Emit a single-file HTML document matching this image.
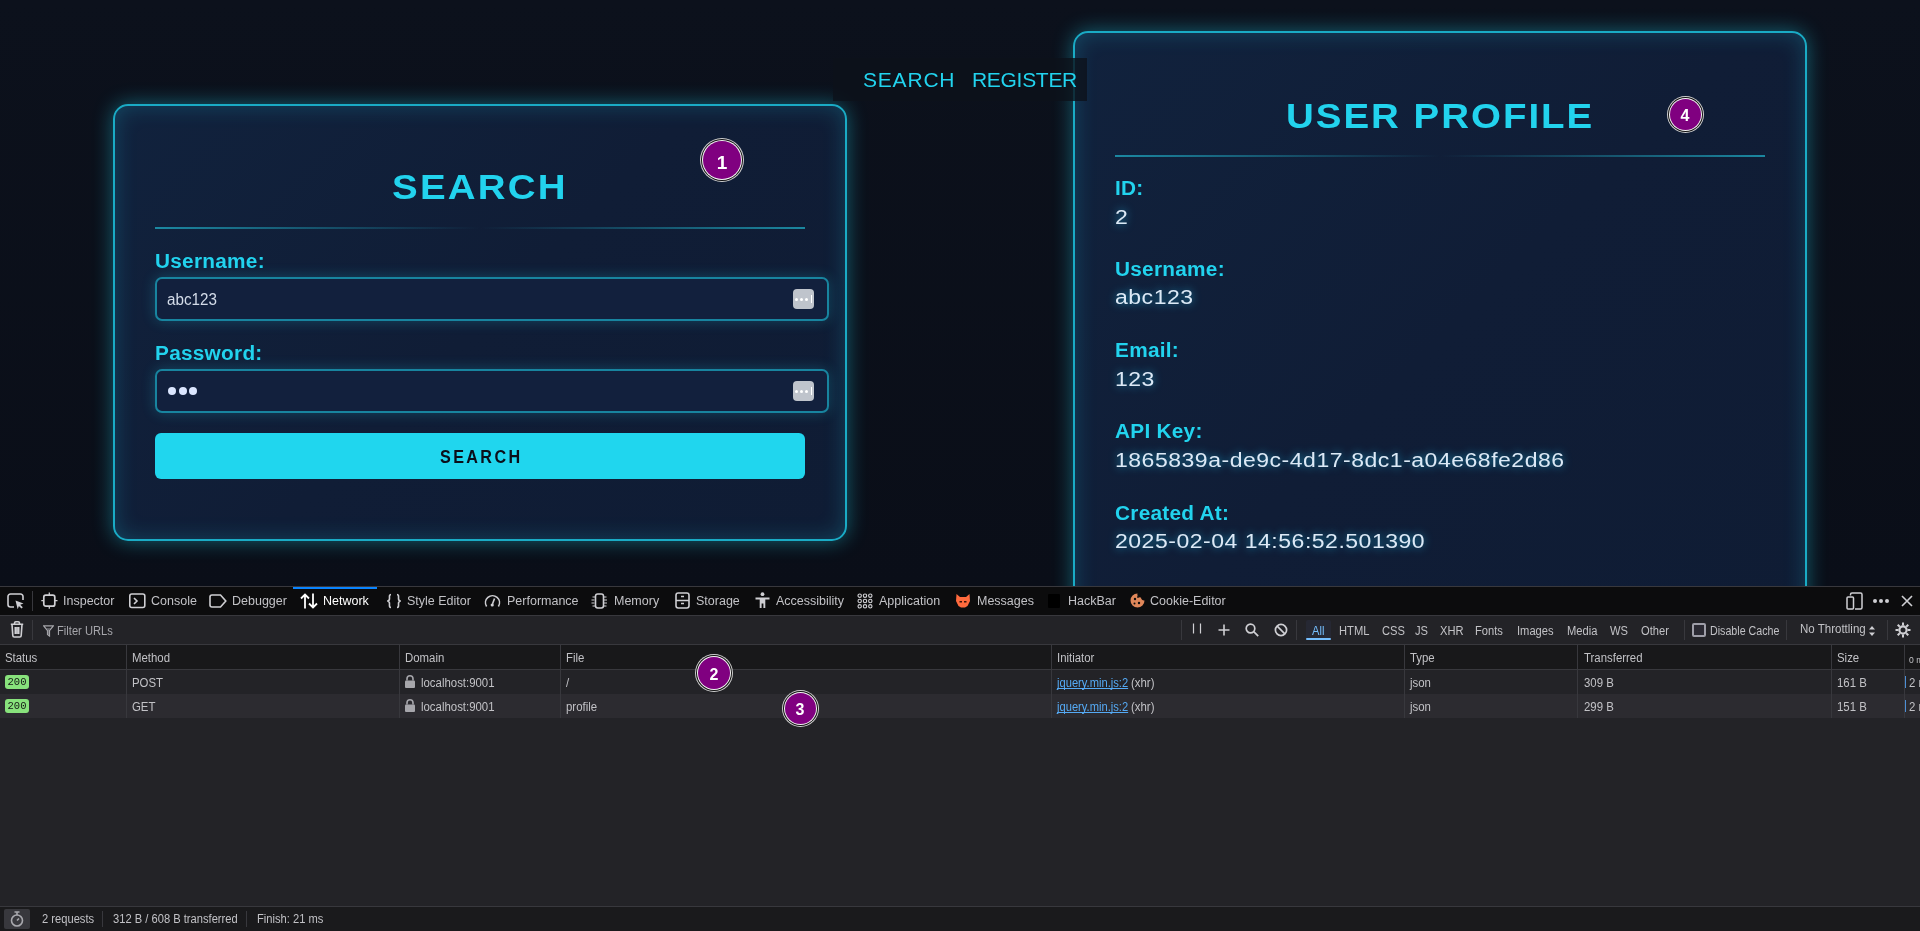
<!DOCTYPE html>
<html><head><meta charset="utf-8">
<style>
*{box-sizing:border-box;margin:0;padding:0}
html,body{width:1920px;height:931px;overflow:hidden}
body{background:#0b101b;font-family:"Liberation Sans",sans-serif;position:relative}
.abs{position:absolute;white-space:nowrap;line-height:1}
#page{position:absolute;left:0;top:0;width:1920px;height:586px;overflow:hidden;background:linear-gradient(180deg,#0c111c 0%,#0a0e18 100%)}
.card{position:absolute;width:734px;border:2px solid #1aabc5;border-radius:15px;
 background:linear-gradient(135deg,#11223d 0%,#101d36 50%,#0f1c34 100%);
 box-shadow:0 0 20px rgba(34,211,238,0.42),inset 0 0 22px rgba(34,211,238,0.22)}
.divider{position:absolute;height:2px;width:650px;
 background:linear-gradient(90deg,rgba(34,200,225,0.62),rgba(34,200,225,0) 50%,rgba(34,200,225,0.62))}
.title{color:#22d3ee;font-weight:bold;font-size:35px;letter-spacing:2px;transform:scaleX(1.1);transform-origin:0 0}
.lbl{color:#22d3ee;font-weight:bold;font-size:20px;letter-spacing:0.25px;transform:scaleX(1.04);transform-origin:0 0}
.val{color:#dce9f6;font-size:20px;letter-spacing:0.45px;margin-top:1px;transform:scaleX(1.15);transform-origin:0 0;text-shadow:0 0 8px rgba(34,190,238,0.75)}
.inp{position:absolute;left:155px;width:674px;height:44px;border:2px solid #18849f;border-radius:7px;background:#12203d;
 box-shadow:0 0 14px rgba(34,211,238,0.24)}
.key{position:absolute;left:636px;top:10px;width:21px;height:20px;background:#bfc4cc;border-radius:4px}
.key i{position:absolute;top:8.5px;width:3.4px;height:3.4px;border-radius:50%;background:#fff}
.key b{position:absolute;left:17.5px;top:6px;width:1px;height:8px;background:#fff}
.btn{position:absolute;left:155px;top:433px;width:650px;height:46px;background:#20d6ee;border-radius:6px}
.badge{position:absolute;width:38px;height:38px;border-radius:50%;background:#800080;
 box-shadow:0 0 0 1px #f4f4f4,0 0 0 2px #111,0 0 0 3px #cfcfcf;color:#fff;font-weight:bold;text-align:center}
.dot{position:absolute;top:387px;width:8px;height:8px;border-radius:50%;background:#dbe6ff}
.nav{position:absolute;left:833px;top:58px;width:254px;height:43px;background:rgba(13,17,26,0.8)}

#dt .sep{position:absolute;background:#38383d}
#dt .ic{position:absolute}
#dt .tab{position:absolute;top:595px;font-size:12.5px;line-height:12px;color:#c2c2c6;white-space:nowrap}
#dt .tb{position:absolute;top:625px;transform:scaleX(0.93);transform-origin:0 0;font-size:12px;line-height:12px;color:#c2c2c6;white-space:nowrap}
#dt .col{position:absolute;top:645px;width:1px;height:73px;background:#38383d}
#dt .hd{position:absolute;top:652px;transform:scaleX(0.95);transform-origin:0 0;font-size:12px;line-height:12px;color:#c2c2c6;white-space:nowrap}
#dt .rw{position:absolute;transform:scaleX(0.95);transform-origin:0 0;font-size:12px;line-height:12px;color:#c2c2c6;white-space:nowrap}
#dt .lnk{color:#55aaf5;text-decoration:underline;text-decoration-skip-ink:none;transform:scaleX(0.93)}
#dt .bdg{position:absolute;left:5px;width:24px;height:14px;background:#88e27c;border-radius:3px;color:#151515;font-family:"Liberation Mono",monospace;font-size:10.5px;line-height:15px;text-align:center}
#dt .st{position:absolute;top:913px;transform:scaleX(0.93);transform-origin:0 0;font-size:12px;line-height:12px;color:#c2c2c6;white-space:nowrap}
</style></head><body>
<div id="page" style="will-change:transform">
 <!-- search card -->
 <div class="card" style="left:113px;top:104px;height:437px"></div>
 <div class="abs title" style="left:392px;top:169px">SEARCH</div>
 <div class="divider" style="left:155px;top:227px"></div>
 <div class="abs lbl" style="left:155px;top:251px">Username:</div>
 <div class="inp" style="top:277px"><div class="key"><i style="left:2px"></i><i style="left:7px"></i><i style="left:12px"></i><b></b></div></div>
 <div class="abs" style="left:167px;top:292px;font-size:16px;transform:scaleX(0.95);transform-origin:0 0;color:#d3dbe8">abc123</div>
 <div class="abs lbl" style="left:155px;top:343px">Password:</div>
 <div class="inp" style="top:369px"><div class="key"><i style="left:2px"></i><i style="left:7px"></i><i style="left:12px"></i><b></b></div></div>
 <div class="dot" style="left:168px"></div><div class="dot" style="left:178.7px"></div><div class="dot" style="left:189.4px"></div>
 <div class="btn"></div>
 <div class="abs" style="left:440px;top:447px;font-size:19px;font-weight:bold;letter-spacing:2.8px;transform:scaleX(0.85);transform-origin:0 0;color:#0b0f1a">SEARCH</div>

 <!-- profile card -->
 <div class="card" style="left:1073px;top:31px;height:620px"></div>
 <div class="abs title" style="left:1286px;top:97.5px;letter-spacing:1.8px">USER PROFILE</div>
 <div class="divider" style="left:1115px;top:155px"></div>
 <div class="abs lbl" style="left:1115px;top:178px">ID:</div>
 <div class="abs val" style="left:1115px;top:206px">2</div>
 <div class="abs lbl" style="left:1115px;top:259px">Username:</div>
 <div class="abs val" style="left:1115px;top:286px">abc123</div>
 <div class="abs lbl" style="left:1115px;top:340px">Email:</div>
 <div class="abs val" style="left:1115px;top:368px">123</div>
 <div class="abs lbl" style="left:1115px;top:421px">API Key:</div>
 <div class="abs val" style="left:1115px;top:449px">1865839a-de9c-4d17-8dc1-a04e68fe2d86</div>
 <div class="abs lbl" style="left:1115px;top:503px">Created At:</div>
 <div class="abs val" style="left:1115px;top:530px">2025-02-04 14:56:52.501390</div>

 <!-- nav -->
 <div class="nav"></div>
 <div class="abs" style="left:863px;top:69px;font-size:21px;letter-spacing:0.8px;color:#22d3ee">SEARCH</div>
 <div class="abs" style="left:972px;top:69px;font-size:21px;letter-spacing:-0.3px;color:#22d3ee">REGISTER</div>

 <div class="badge" style="left:703px;top:141px;font-size:19px;line-height:43px">1</div>
 <div class="badge" style="left:1669.5px;top:98.5px;width:31px;height:31px;font-size:16px;line-height:33px">4</div>
</div>
<!-- DEVTOOLS -->

<div id="dt" style="position:absolute;left:0;top:0;width:1920px;height:931px;will-change:transform">
 <div class="sep" style="left:0;top:586px;width:1920px;height:1px"></div>
 <div style="position:absolute;left:0;top:587px;width:1920px;height:28px;background:#0c0c0d"></div>
 <div class="sep" style="left:0;top:615px;width:1920px;height:1px"></div>
 <div style="position:absolute;left:0;top:616px;width:1920px;height:28px;background:#232327"></div>
 <div class="sep" style="left:0;top:644px;width:1920px;height:1px"></div>
 <div style="position:absolute;left:0;top:645px;width:1920px;height:24px;background:#18181a"></div>
 <div class="sep" style="left:0;top:669px;width:1920px;height:1px"></div>
 <div style="position:absolute;left:0;top:670px;width:1920px;height:24px;background:#232327"></div>
 <div style="position:absolute;left:0;top:694px;width:1920px;height:24px;background:#2c2b30"></div>
 <div style="position:absolute;left:0;top:718px;width:1920px;height:188px;background:#232327"></div>
 <div class="sep" style="left:0;top:906px;width:1920px;height:1px"></div>
 <div style="position:absolute;left:0;top:907px;width:1920px;height:24px;background:#1a1a1c"></div>
 <!-- active tab bar -->
 <div style="position:absolute;left:293px;top:587px;width:84px;height:2px;background:#0a84ff"></div>
 <!-- tab separators -->
 <div class="sep" style="left:32px;top:591px;width:1px;height:20px"></div>
 <!-- TAB ICONS -->
 <svg class="ic" style="left:7px;top:593px" width="18" height="16" viewBox="0 0 18 16" fill="none" stroke="#cfcfd3" stroke-width="1.6">
  <path d="M7 14H3.5A2.5 2.5 0 0 1 1 11.5V3.5A2.5 2.5 0 0 1 3.5 1h10A2.5 2.5 0 0 1 16 3.5V7"/>
  <path d="M8.5 7.5l8 3-3.3 1.2 2.6 2.6-1.3 1.3-2.6-2.6-1.2 3.3z" fill="#cfcfd3" stroke="none"/></svg>
 <svg class="ic" style="left:41px;top:592px" width="17" height="17" viewBox="0 0 17 17" fill="none" stroke="#cfcfd3" stroke-width="1.7">
  <rect x="2.8" y="3.2" width="11" height="11" rx="2"/><path d="M8.3 0.5v2.5M8.3 14.2v2.5M0.3 8.7h2.5M14 8.7h2.5" stroke-width="1.3"/></svg>
 <svg class="ic" style="left:129px;top:593px" width="17" height="16" viewBox="0 0 17 16" fill="none" stroke="#cfcfd3" stroke-width="1.6">
  <rect x="0.8" y="1" width="15" height="13.5" rx="2"/><path d="M5 5l3 3-3 3"/></svg>
 <svg class="ic" style="left:209px;top:594px" width="18" height="14" viewBox="0 0 18 14" fill="none" stroke="#cfcfd3" stroke-width="1.6">
  <path d="M1 3A2 2 0 0 1 3 1h8.5l5.3 6-5.3 6H3a2 2 0 0 1-2-2z"/></svg>
 <svg class="ic" style="left:300px;top:593px" width="18" height="16" viewBox="0 0 18 16" fill="none" stroke="#fff" stroke-width="1.8">
  <path d="M5 15.5V1.5M1 5.5l4-4 4 4M13 0.5v14M9 10.5l4 4 4-4"/></svg>
 <svg class="ic" style="left:386px;top:593px" width="16" height="16" viewBox="0 0 16 16" fill="none" stroke="#cfcfd3" stroke-width="1.6">
  <path d="M5 1.5C3 1.5 3.5 4 3.5 5.5S3 8 1.2 8C3 8 3.5 9 3.5 10.5S3 14.5 5 14.5M11 1.5c2 0 1.5 2.5 1.5 4S13 8 14.8 8c-1.8 0-2.3 1-2.3 2.5s.5 4-1.5 4"/></svg>
 <svg class="ic" style="left:484px;top:593px" width="17" height="16" viewBox="0 0 17 16" fill="none" stroke="#cfcfd3" stroke-width="1.6">
  <path d="M2.6 13.5A7 7 0 1 1 14.4 13.5"/><path d="M10.5 5.5L8.5 11" /><circle cx="8.2" cy="12" r="1.6" fill="#cfcfd3" stroke="none"/></svg>
 <svg class="ic" style="left:591px;top:593px" width="17" height="16" viewBox="0 0 17 16" fill="none" stroke="#cfcfd3" stroke-width="1.6">
  <rect x="4.5" y="1" width="8" height="14" rx="2.2"/><path d="M1.5 4h2.5M0.5 7h3M0.5 10h3M1.5 13h2.5M13 4h2.5M13 7h3M13 10h3M13 13h2.5" stroke-width="1.1"/></svg>
 <svg class="ic" style="left:675px;top:592px" width="15" height="17" viewBox="0 0 15 17" fill="none" stroke="#cfcfd3" stroke-width="1.6">
  <rect x="1" y="1" width="13" height="15" rx="2.2"/><path d="M1 8.5h13M6 4.5h3M6 11.5h3"/></svg>
 <svg class="ic" style="left:755px;top:592px" width="15" height="17" viewBox="0 0 15 17">
  <circle cx="7.5" cy="2.2" r="1.9" fill="#cfcfd3"/><path d="M0.5 5.5h14v2h-4.2V16H8.4v-4.5H6.6V16H4.7V7.5H0.5z" fill="#cfcfd3"/></svg>
 <svg class="ic" style="left:857px;top:593px" width="16" height="16" viewBox="0 0 16 16" fill="none" stroke="#cfcfd3" stroke-width="1.1">
  <circle cx="2.7" cy="2.7" r="1.7"/><circle cx="8" cy="2.7" r="1.7"/><circle cx="13.3" cy="2.7" r="1.7"/>
  <circle cx="2.7" cy="8" r="1.7"/><circle cx="8" cy="8" r="1.7"/><circle cx="13.3" cy="8" r="1.7"/>
  <circle cx="2.7" cy="13.3" r="1.7"/><circle cx="8" cy="13.3" r="1.7"/><circle cx="13.3" cy="13.3" r="1.7"/></svg>
 <svg class="ic" style="left:955px;top:593px" width="16" height="15" viewBox="0 0 16 15">
  <path d="M1.5 1l3.5 3h6l3.5-3 .5 7-2.5 5-2.5 1.5h-4L3.5 13 1 8z" fill="#ff6a3d"/><path d="M4.5 8h2.5v1.5h-2.5zM9 8h2.5v1.5H9z" fill="#3a1208"/></svg>
 <div style="position:absolute;left:1048px;top:594px;width:12px;height:14px;background:#000;border-radius:1px"></div>
 <svg class="ic" style="left:1130px;top:593px" width="15" height="15" viewBox="0 0 15 15">
  <path d="M7.5 0.5A7 7 0 1 0 14.5 7.5 3 3 0 0 1 11 4.5 3 3 0 0 1 7.5 0.5z" fill="#e0875a"/>
  <circle cx="5" cy="6" r="1.2" fill="#0c0c0d"/><circle cx="9" cy="10" r="1.2" fill="#0c0c0d"/><circle cx="4.5" cy="10.5" r="1" fill="#0c0c0d"/><circle cx="8" cy="4" r="0.9" fill="#0c0c0d"/></svg>
 <!-- tab labels -->
 <div class="tab" style="left:63px">Inspector</div>
 <div class="tab" style="left:151px">Console</div>
 <div class="tab" style="left:232px">Debugger</div>
 <div class="tab" style="left:323px;color:#fff">Network</div>
 <div class="tab" style="left:407px">Style Editor</div>
 <div class="tab" style="left:507px">Performance</div>
 <div class="tab" style="left:614px">Memory</div>
 <div class="tab" style="left:696px">Storage</div>
 <div class="tab" style="left:776px">Accessibility</div>
 <div class="tab" style="left:879px">Application</div>
 <div class="tab" style="left:977px">Messages</div>
 <div class="tab" style="left:1068px">HackBar</div>
 <div class="tab" style="left:1150px">Cookie-Editor</div>
 <!-- right tab icons -->
 <svg class="ic" style="left:1846px;top:592px" width="17" height="18" viewBox="0 0 17 18" fill="none" stroke="#cfcfd3" stroke-width="1.5">
  <path d="M4.5 3.5V2.5A1.5 1.5 0 0 1 6 1h8.5A1.5 1.5 0 0 1 16 2.5v13A1.5 1.5 0 0 1 14.5 17H9"/><rect x="1" y="5" width="6.5" height="12" rx="1"/></svg>
 <svg class="ic" style="left:1872px;top:598px" width="18" height="6" viewBox="0 0 18 6">
  <circle cx="3" cy="3" r="2" fill="#cfcfd3"/><circle cx="9" cy="3" r="2" fill="#cfcfd3"/><circle cx="15" cy="3" r="2" fill="#cfcfd3"/></svg>
 <svg class="ic" style="left:1901px;top:595px" width="12" height="12" viewBox="0 0 12 12" stroke="#cfcfd3" stroke-width="1.6">
  <path d="M1 1l10 10M11 1L1 11"/></svg>

 <!-- TOOLBAR -->
 <svg class="ic" style="left:10px;top:621px" width="14" height="17" viewBox="0 0 14 17" fill="none" stroke="#cfcfd3" stroke-width="1.6">
  <path d="M0.8 3.3h12.4M4.5 3V2a1.3 1.3 0 0 1 1.3-1.2h2.4A1.3 1.3 0 0 1 9.5 2v1M2 3.5l.8 11a1.5 1.5 0 0 0 1.5 1.5h5.4a1.5 1.5 0 0 0 1.5-1.5l.8-11M5.3 6v7M7 6v7M8.7 6v7" /></svg>
 <div class="sep" style="left:32px;top:620px;width:1px;height:20px"></div>
 <svg class="ic" style="left:43px;top:625px" width="11" height="12" viewBox="0 0 11 12" fill="none" stroke="#a6a6ab" stroke-width="1.2">
  <path d="M0.6 0.8h9.8L6.5 5.5V11L4.5 9.5V5.5z"/><path d="M3.5 3.2h4L6 5.2V9.5L4.9 8.8V5.2z" fill="#6f6f75" stroke="none"/></svg>
 <div class="tb" style="left:57px;color:#a6a6ab">Filter URLs</div>
 <div class="sep" style="left:1181px;top:620px;width:1px;height:20px"></div>
 <svg class="ic" style="left:1191px;top:623px" width="12" height="12" viewBox="0 0 12 12" stroke="#cfcfd3" stroke-width="1.2"><path d="M2.5 0.5v10M9.5 0.5v10"/></svg>
 <svg class="ic" style="left:1218px;top:624px" width="12" height="12" viewBox="0 0 12 12" stroke="#cfcfd3" stroke-width="1.6"><path d="M6 0.5v11M0.5 6h11"/></svg>
 <svg class="ic" style="left:1245px;top:623px" width="14" height="14" viewBox="0 0 14 14" fill="none" stroke="#cfcfd3" stroke-width="1.7"><circle cx="5.5" cy="5.5" r="4.3"/><path d="M8.7 8.7l4.5 4.5"/></svg>
 <svg class="ic" style="left:1274px;top:623px" width="14" height="14" viewBox="0 0 14 14" fill="none" stroke="#cfcfd3" stroke-width="1.7"><circle cx="7" cy="7" r="5.6"/><path d="M3.2 3.2l7.6 7.6"/></svg>
 <div class="sep" style="left:1296px;top:620px;width:1px;height:20px"></div>
 <div style="position:absolute;left:1306px;top:620px;width:25px;height:20px;background:#262833;border-radius:2px"></div>
 <div style="position:absolute;left:1306px;top:638px;width:25px;height:2px;background:#75bfff;border-radius:1px"></div>
 <div class="tb" style="left:1312px;color:#75bfff">All</div>
 <div class="tb" style="left:1339px">HTML</div>
 <div class="tb" style="left:1382px">CSS</div>
 <div class="tb" style="left:1415px">JS</div>
 <div class="tb" style="left:1440px">XHR</div>
 <div class="tb" style="left:1475px">Fonts</div>
 <div class="tb" style="left:1517px">Images</div>
 <div class="tb" style="left:1567px">Media</div>
 <div class="tb" style="left:1610px">WS</div>
 <div class="tb" style="left:1641px">Other</div>
 <div class="sep" style="left:1684px;top:620px;width:1px;height:20px"></div>
 <div style="position:absolute;left:1692px;top:623px;width:14px;height:14px;border:2px solid #9e9ea8;border-radius:2px;background:#2b2a33"></div>
 <div class="tb" style="left:1709.5px;transform:scaleX(0.89)">Disable Cache</div>
 <div class="sep" style="left:1786px;top:620px;width:1px;height:20px"></div>
 <div class="tb" style="left:1800px;top:623px;transform:scaleX(0.96)">No Throttling</div>
 <svg class="ic" style="left:1869px;top:626px" width="6" height="10" viewBox="0 0 6 10" fill="#cfcfd3"><path d="M3 0l3 3.5H0zM3 10l3-3.5H0z"/></svg>
 <div class="sep" style="left:1887px;top:620px;width:1px;height:20px"></div>
 <svg class="ic" style="left:1895px;top:622px" width="16" height="16" viewBox="0 0 16 16" fill="none" stroke="#cfcfd3">
  <circle cx="8" cy="8" r="3.6" stroke-width="2.2"/><path d="M8 0.5v3M8 12.5v3M0.5 8h3M12.5 8h3M2.7 2.7l2.1 2.1M11.2 11.2l2.1 2.1M2.7 13.3l2.1-2.1M11.2 4.8l2.1-2.1" stroke-width="2"/></svg>

 <!-- HEADER -->
 <div class="col" style="left:126px"></div><div class="col" style="left:399px"></div><div class="col" style="left:560px"></div>
 <div class="col" style="left:1051px"></div><div class="col" style="left:1404px"></div><div class="col" style="left:1577px"></div>
 <div class="col" style="left:1831px"></div><div class="col" style="left:1904px"></div>
 <div class="hd" style="left:5px">Status</div>
 <div class="hd" style="left:132px">Method</div>
 <div class="hd" style="left:405px">Domain</div>
 <div class="hd" style="left:566px">File</div>
 <div class="hd" style="left:1057px">Initiator</div>
 <div class="hd" style="left:1410px">Type</div>
 <div class="hd" style="left:1584px">Transferred</div>
 <div class="hd" style="left:1837px">Size</div>
 <div class="hd" style="left:1909px;font-size:9px;top:654px">0 ms</div>

 <!-- ROWS -->
 <div class="bdg" style="top:675px">200</div>
 <div class="rw" style="left:132px;top:677px">POST</div>
 <svg class="ic" style="left:405px;top:675px" width="10" height="13" viewBox="0 0 10 13" fill="#a6a6ab"><path d="M2 5.5V3.8a3 3 0 0 1 6 0v1.7" fill="none" stroke="#a6a6ab" stroke-width="1.6"/><rect x="0" y="5.5" width="10" height="7.5" rx="1"/></svg>
 <div class="rw" style="left:421px;top:677px">localhost:9001</div>
 <div class="rw" style="left:566px;top:677px">/</div>
 <div class="rw lnk" style="left:1057px;top:677px">jquery.min.js:2</div>
 <div class="rw" style="left:1131px;top:677px">(xhr)</div>
 <div class="rw" style="left:1410px;top:677px">json</div>
 <div class="rw" style="left:1584px;top:677px">309 B</div>
 <div class="rw" style="left:1837px;top:677px">161 B</div>
 <div style="position:absolute;left:1905px;top:676px;width:1px;height:12px;background:#4d8fd6"></div>
 <div class="rw" style="left:1909px;top:677px">2 ms</div>

 <div class="bdg" style="top:699px">200</div>
 <div class="rw" style="left:132px;top:701px">GET</div>
 <svg class="ic" style="left:405px;top:699px" width="10" height="13" viewBox="0 0 10 13" fill="#a6a6ab"><path d="M2 5.5V3.8a3 3 0 0 1 6 0v1.7" fill="none" stroke="#a6a6ab" stroke-width="1.6"/><rect x="0" y="5.5" width="10" height="7.5" rx="1"/></svg>
 <div class="rw" style="left:421px;top:701px">localhost:9001</div>
 <div class="rw" style="left:566px;top:701px">profile</div>
 <div class="rw lnk" style="left:1057px;top:701px">jquery.min.js:2</div>
 <div class="rw" style="left:1131px;top:701px">(xhr)</div>
 <div class="rw" style="left:1410px;top:701px">json</div>
 <div class="rw" style="left:1584px;top:701px">299 B</div>
 <div class="rw" style="left:1837px;top:701px">151 B</div>
 <div style="position:absolute;left:1905px;top:700px;width:1px;height:12px;background:#4d8fd6"></div>
 <div class="rw" style="left:1909px;top:701px">2 ms</div>

 <!-- STATUS BAR -->
 <div style="position:absolute;left:4px;top:909px;width:26px;height:20px;background:#38383d;border-radius:2px"></div>
 <svg class="ic" style="left:10px;top:911px" width="14" height="16" viewBox="0 0 14 16" fill="none" stroke="#a9a9ae" stroke-width="1.6"><circle cx="7" cy="9.5" r="5.5"/><path d="M4.5 1h5M7 1v3M7 9.5l2-2"/></svg>
 <div class="st" style="left:42px">2 requests</div>
 <div class="sep" style="left:102px;top:911px;width:1px;height:16px"></div>
 <div class="st" style="left:113px">312 B / 608 B transferred</div>
 <div class="sep" style="left:246px;top:911px;width:1px;height:16px"></div>
 <div class="st" style="left:257px">Finish: 21 ms</div>
</div>


<div class="badge" style="left:698px;top:657px;width:32px;height:32px;font-size:16px;line-height:36px;z-index:5">2</div>
<div class="badge" style="left:784.5px;top:692.5px;width:31px;height:31px;font-size:16px;line-height:33px;z-index:5">3</div>
</body></html>
